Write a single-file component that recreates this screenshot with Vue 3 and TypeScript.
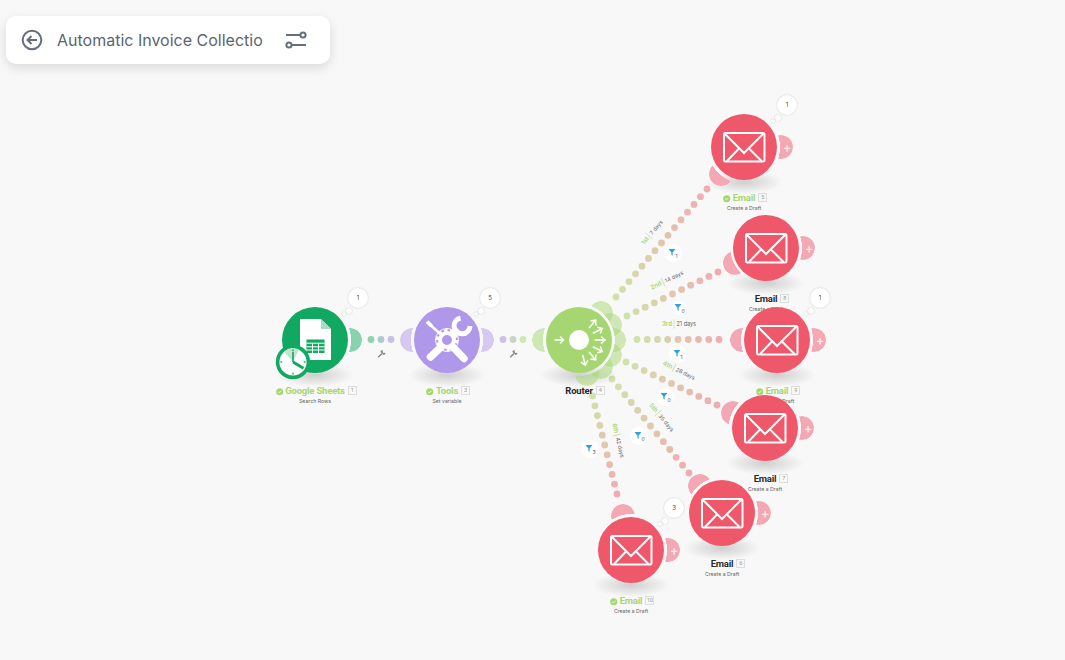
<template>
  <div class="canvas">
    <div class="panel">
      <svg class="panel-icon" viewBox="0 0 22 22">
        <circle cx="11" cy="11" r="9.3" />
        <path d="M16 11H6.5M10.5 7 6.5 11l4 4" />
      </svg>
      <span class="panel-title">Automatic Invoice Collectio</span>
      <svg class="panel-icon" viewBox="0 0 22 22">
        <path d="M1 6H15M7 16H21" />
        <circle cx="18" cy="6" r="2.6" />
        <circle cx="4" cy="16" r="2.6" />
      </svg>
    </div>

    <svg class="links" width="1065" height="660">
      <circle v-for="(d, i) in dots" :key="i" :cx="d.x" :cy="d.y" r="3.4" :fill="d.color" />
      <g v-for="w in wrenches" :key="w" :transform="`translate(${w} 354.5) rotate(45)`" class="wrench">
        <path d="M0 4V-1.5" />
        <path d="M-1.8 -4V-2.2H1.8V-4" />
      </g>
      <g v-for="l in routes" :key="l.first" :transform="`translate(${l.lx} ${l.ly}) rotate(${l.rot})`">
        <text class="route-first" x="-2" y="2" text-anchor="end">{{ l.first }}</text>
        <line x1="0" x2="0" y1="-4.5" y2="4.5" class="route-sep" />
        <text class="route-days" x="2.5" y="2">{{ l.days }}</text>
      </g>
      <g v-for="l in routes" :key="l.first + 'f'" :transform="`translate(${l.fx} ${l.fy})`">
        <circle :r="l.fr" fill="#fff" />
        <path d="M-4.5 -4H2.5L-0.4 -0.6V2.8L-1.6 2V-0.6Z" fill="#2f9fe0" />
        <text class="filter-count" x="2.5" y="5">{{ l.count }}</text>
      </g>
    </svg>

    <div v-for="n in nodes" :key="n.id" class="node" :style="{ left: n.x - 33 + 'px', top: n.y - 33 + 'px' }">
      <div class="node-shadow" />
      <span v-for="(h, i) in n.handles" :key="i" class="handle" :style="handleStyle(n, h)">
        <i v-if="h.plus" class="plus">+</i>
      </span>
      <div class="disc" :style="{ background: n.color }">
        <svg class="glyph" viewBox="-33 -33 66 66">
          <g v-if="n.kind === 'email'" class="mail">
            <rect x="-20" y="-14" width="40.5" height="28.5" rx="1.5" />
            <path d="M-19.5 -13.5-1 5 0 6 1 5 19.5-13.5M-17 14-5 1.5M17.5 14 5 1.5" />
          </g>
          <g v-else-if="n.kind === 'sheets'">
            <path d="M-15 -21H6L16 -11V20H-15Z" fill="#fff" />
            <path d="M6 -21 16 -11H6Z" fill="#a9dcc2" />
            <rect x="-8.5" y="-0.5" width="18" height="13.5" fill="#11a862" />
            <path d="M-8.5 3.2H9.5M-8.5 6.8H9.5M-8.5 10H9.5M-2.5 3V13M3.5 3V13" stroke="#fff" stroke-width="1" />
            <g transform="translate(-22 22)">
              <circle r="15.4" fill="#fff" stroke="#11a862" stroke-width="3.6" />
              <path d="M0 0-9 -10.5A14 14 0 0 1 6 -12.4Z" fill="#bfe6d1" />
              <path d="M0 0 10.5 6.2" stroke="#11a862" stroke-width="3" />
              <path d="M0 0V-10" stroke="#11a862" stroke-width="1.6" />
              <path d="M0 -12.5V-10.8M0 12.5V10.8M-12.5 0H-10.8M12.5 0H10.8" stroke="#11a862" stroke-width="1.4" />
            </g>
          </g>
          <g v-else-if="n.kind === 'tools'" class="tools">
            <path d="M-20 -18.5-15.5 -14" stroke-width="3.8" />
            <path d="M-16 -14.5-5 -4.5" stroke-width="2.4" />
            <path d="M6 7 17 18.5" stroke-width="7.4" stroke-linecap="round" />
            <path d="M-6 7-16.5 17" stroke-width="7.4" stroke-linecap="round" />
            <circle cx="-17" cy="17.5" r="1.5" fill="#af97e9" stroke="none" />
            <path d="M5 -5 11 -11" stroke-width="5" />
            <path d="M23 -14A8 8 0 1 1 13.5 -22" stroke-width="5" />
            <circle r="11.5" fill="#af97e9" stroke="none" />
            <circle r="7" stroke-width="4" />
            <circle r="9.6" stroke-width="3" stroke-dasharray="3.4 2.6" />
          </g>
          <g v-else class="router">
            <circle r="10" fill="#fff" stroke="none" />
            <path d="M-24.5 0H-15.5M-19 -3.5-15.5 0-19 3.5" />
            <path
              v-for="r in routes"
              :key="r.first"
              :transform="`rotate(${r.rot})`"
              d="M15.5 0H26M22 -3.5 26 0 22 3.5"
            />
          </g>
        </svg>
      </div>
      <template v-if="n.bubble">
        <span class="bubble">{{ n.bubble }}</span>
        <span class="puff puff-big" />
        <span class="puff puff-small" />
      </template>
      <div class="caption">
        <div class="name-row">
          <span class="name" :class="{ ok: n.ok }">
            <svg v-if="n.ok" class="check" viewBox="0 0 8 8">
              <circle cx="4" cy="4" r="3.8" fill="#a6d672" />
              <path d="M2.2 4.1 3.5 5.3 5.8 2.9" fill="none" stroke="#fff" stroke-width="0.8" />
            </svg>
            {{ n.name }}
            <span class="index">{{ n.id }}</span>
          </span>
        </div>
        <div class="sub">{{ n.sub }}</div>
      </div>
    </div>
  </div>
</template>

<script setup lang="ts">
interface IRoute {
  first: string;
  days: string;
  from: [number, number];
  to: [number, number];
  n: number;
  rot: number;
  lx: number;
  ly: number;
  fx: number;
  fy: number;
  fr: number;
  count: number;
}

interface IHandle {
  x: number;
  y: number;
  plus?: boolean;
}

interface INode {
  id: number;
  kind: string;
  x: number;
  y: number;
  name: string;
  sub: string;
  color: string;
  handle: string;
  ok: boolean;
  bubble?: number;
  handles: IHandle[];
}

const routes: IRoute[] = [
  { first: '1st', days: '7 days', from: [616, 297], to: [707, 189], n: 15, rot: -50, lx: 649, ly: 236, fx: 673, fy: 253, fr: 9, count: 1 },
  { first: '2nd', days: '14 days', from: [627, 316], to: [718, 272], n: 11, rot: -26, lx: 663, ly: 282, fx: 679, fy: 308, fr: 7, count: 0 },
  { first: '3rd', days: '21 days', from: [637, 339.5], to: [719, 339.5], n: 9, rot: 0, lx: 674, ly: 324, fx: 678, fy: 354, fr: 9, count: 1 },
  { first: '4th', days: '28 days', from: [626, 362], to: [717, 405], n: 11, rot: 26, lx: 674, ly: 368, fx: 665, fy: 397, fr: 9, count: 0 },
  { first: '5th', days: '35 days', from: [612, 379], to: [689, 473], n: 13, rot: 50, lx: 658, ly: 413, fx: 639, fy: 436, fr: 9, count: 0 },
  { first: '6th', days: '42 days', from: [592.5, 396], to: [617, 494], n: 11, rot: 76, lx: 617, ly: 435, fx: 590, fy: 449, fr: 9, count: 3 },
];

const mix = (t: number) => {
  const a = [208, 226, 170];
  const b = [240, 172, 176];
  return `rgb(${a.map((v, i) => Math.round(v + (b[i] - v) * t)).join(',')})`;
};

const dots = [
  { x: 371, y: 339.5, color: '#8fd2b1' },
  { x: 381, y: 339.5, color: '#abcbd0' },
  { x: 391, y: 339.5, color: '#c9bdea' },
  { x: 503, y: 339.5, color: '#cdbfee' },
  { x: 513, y: 339.5, color: '#cad3cb' },
  { x: 523, y: 339.5, color: '#cfe6b6' },
  ...routes.flatMap((r) =>
    Array.from({ length: r.n }, (_, i) => {
      const t = i / (r.n - 1);
      return {
        x: r.from[0] + (r.to[0] - r.from[0]) * t,
        y: r.from[1] + (r.to[1] - r.from[1]) * t,
        color: mix(t),
      };
    }),
  ),
];

const wrenches = [381, 513];

const RED = '#ee586a';
const PINK = '#f3a8b4';

// incoming handle sits on the line towards the router
const towards = (x: number, y: number): IHandle => {
  const dx = 579 - x;
  const dy = 340 - y;
  const len = Math.hypot(dx, dy);
  return { x: (dx / len) * 35, y: (dy / len) * 35 };
};

// the handle is cut round the disc, which leaves the small gap next to it
const handleStyle = (n: INode, h: IHandle) => {
  const mask = `radial-gradient(circle at ${12 - h.x}px ${12 - h.y}px, transparent 35.8px, #000 36.2px)`;
  return {
    left: 21 + h.x + 'px',
    top: 21 + h.y + 'px',
    background: n.handle,
    maskImage: mask,
    WebkitMaskImage: mask,
  };
};

const email = (id: number, x: number, y: number, ok: boolean, bubble?: number): INode => ({
  id,
  kind: 'email',
  x,
  y,
  name: 'Email',
  sub: 'Create a Draft',
  color: RED,
  handle: PINK,
  ok,
  bubble,
  handles: [towards(x, y), { x: 37, y: 0, plus: true }],
});

const routerLobes: IHandle[] = [
  { x: -35, y: 0 },
  ...routes.map((r) => ({
    x: Math.cos((r.rot * Math.PI) / 180) * 35,
    y: Math.sin((r.rot * Math.PI) / 180) * 35,
  })),
];

const nodes: INode[] = [
  { id: 1, kind: 'sheets', x: 315, y: 340, name: 'Google Sheets', sub: 'Search Rows', color: '#11a862', handle: '#8ad1ae', ok: true, bubble: 1, handles: [{ x: 35, y: 0 }] },
  { id: 3, kind: 'tools', x: 447, y: 340, name: 'Tools', sub: 'Set variable', color: '#af97e9', handle: '#d5c8f1', ok: true, bubble: 5, handles: [{ x: -35, y: 0 }, { x: 35, y: 0 }] },
  { id: 4, kind: 'router', x: 579, y: 340, name: 'Router', sub: '', color: '#a6d672', handle: 'rgba(166, 214, 114, 0.5)', ok: false, handles: routerLobes },
  email(5, 744, 147, true, 1),
  email(8, 766, 248, false),
  email(9, 777, 340, true, 1),
  email(7, 765, 428, false),
  email(6, 722, 513, false),
  email(10, 631, 550, true, 3),
];
</script>

<style scoped>
.canvas {
  position: relative;
  width: 1065px;
  height: 660px;
  overflow: hidden;
  background: #f8f8f8;
  font-family: Inter, 'Liberation Sans', sans-serif;
}
.panel {
  position: absolute;
  left: 6px;
  top: 16px;
  z-index: 5;
  width: 324px;
  height: 48px;
  box-sizing: border-box;
  padding-left: 15px;
  display: flex;
  align-items: center;
  background: #fff;
  border-radius: 10px;
  box-shadow: 0 4px 12px rgba(0, 0, 0, 0.12);
}
.panel-icon {
  width: 22px;
  height: 22px;
  flex: none;
  fill: none;
  stroke: #64707e;
  stroke-width: 2;
}
.panel-title {
  width: 206px;
  margin: 0 22px 0 14px;
  white-space: nowrap;
  font-size: 16px;
  color: #5b6472;
}
.links {
  position: absolute;
  left: 0;
  top: 0;
}
.wrench path {
  fill: none;
  stroke: #8a8a8a;
  stroke-width: 1.5;
}
.route-first {
  font-size: 6.2px;
  font-weight: 600;
  fill: #a6d672;
}
.route-days {
  font-size: 5.5px;
  fill: #666;
}
.route-sep {
  stroke: #c5dda8;
  stroke-width: 0.8;
}
.filter-count {
  font-size: 5px;
  fill: #555;
}
.node {
  position: absolute;
  width: 66px;
  height: 66px;
}
.node-shadow {
  position: absolute;
  left: -6px;
  top: 56px;
  width: 78px;
  height: 24px;
  background: radial-gradient(closest-side, rgba(0, 0, 0, 0.17), rgba(0, 0, 0, 0));
}
.handle {
  position: absolute;
  width: 24px;
  height: 24px;
  border-radius: 50%;
}
.plus {
  position: absolute;
  left: 12px;
  top: 5px;
  width: 12px;
  text-align: center;
  font-style: normal;
  font-size: 13px;
  line-height: 14px;
  font-weight: 600;
  color: rgba(255, 255, 255, 0.75);
}
.disc {
  position: relative;
  width: 66px;
  height: 66px;
  border-radius: 50%;
}
.glyph {
  display: block;
  width: 66px;
  height: 66px;
  overflow: visible;
}
.mail rect,
.mail path {
  fill: none;
  stroke: #fff;
  stroke-width: 2;
}
.tools path,
.tools circle {
  fill: none;
  stroke: #fff;
}
.router path {
  fill: none;
  stroke: #fff;
  stroke-width: 1.5;
}
.bubble {
  position: absolute;
  left: 66px;
  top: -19px;
  width: 20px;
  height: 20px;
  border-radius: 50%;
  background: #fff;
  box-shadow: 0 0 2px rgba(0, 0, 0, 0.2);
  font-size: 6px;
  line-height: 20px;
  text-align: center;
  color: #444;
}
.puff {
  position: absolute;
  border-radius: 50%;
  background: #fff;
  box-shadow: 0 0 1.5px rgba(0, 0, 0, 0.25);
}
.puff-big {
  left: 64px;
  top: 1px;
  width: 6px;
  height: 6px;
}
.puff-small {
  left: 60px;
  top: 5px;
  width: 4px;
  height: 4px;
}
.caption {
  position: absolute;
  left: -40px;
  right: -40px;
  top: 78px;
  text-align: center;
  font-size: 9.5px;
  line-height: 12px;
}
.name-row {
  height: 12px;
}
.name {
  position: relative;
  font-family: Roboto, Inter, sans-serif;
  font-weight: 700;
  letter-spacing: -0.2px;
  color: #2b2b2b;
}
.name.ok {
  color: #a6d672;
}
.check {
  position: absolute;
  left: -9.5px;
  top: 3px;
  width: 7.5px;
  height: 7.5px;
}
.index {
  position: absolute;
  left: 100%;
  top: 1px;
  margin-left: 3px;
  width: 9px;
  height: 9px;
  box-sizing: border-box;
  border: 1px solid #ddd;
  font-size: 5.5px;
  line-height: 7px;
  font-weight: 400;
  letter-spacing: 0;
  color: #999;
}
.sub {
  margin-top: 0;
  font-size: 5.2px;
  line-height: 8px;
  color: #666;
}
</style>
